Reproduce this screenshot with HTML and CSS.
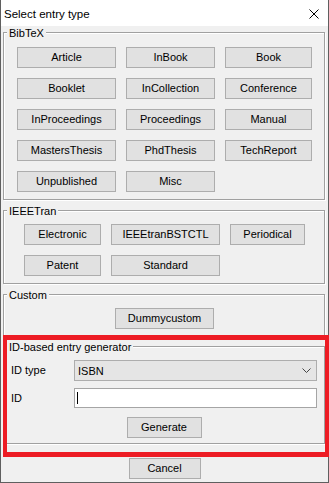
FILE: index.html
```html
<!DOCTYPE html>
<html>
<head>
<meta charset="utf-8">
<title>Select entry type</title>
<link rel="stylesheet" href="styles.css">
</head>
<body>
<div class="window">
  <div class="titlebar">
    <span class="title">Select entry type</span>
    <svg class="close" width="10" height="10" viewBox="0 0 10 10"><path d="M0.5 0.5 L9.5 9.5 M9.5 0.5 L0.5 9.5" stroke="#000" stroke-width="1" fill="none"/></svg>
  </div>
  <div class="body">
    <section class="group">
      <div class="group-title">BibTeX</div>
      <div class="btn-grid grid-bibtex">
        <button class="btn">Article</button>
        <button class="btn">InBook</button>
        <button class="btn">Book</button>
        <button class="btn">Booklet</button>
        <button class="btn">InCollection</button>
        <button class="btn">Conference</button>
        <button class="btn">InProceedings</button>
        <button class="btn">Proceedings</button>
        <button class="btn">Manual</button>
        <button class="btn">MastersThesis</button>
        <button class="btn">PhdThesis</button>
        <button class="btn">TechReport</button>
        <button class="btn">Unpublished</button>
        <button class="btn">Misc</button>
      </div>
    </section>
    <section class="group">
      <div class="group-title">IEEETran</div>
      <div class="btn-grid grid-ieee">
        <button class="btn">Electronic</button>
        <button class="btn">IEEEtranBSTCTL</button>
        <button class="btn">Periodical</button>
        <button class="btn">Patent</button>
        <button class="btn">Standard</button>
      </div>
    </section>
    <section class="group">
      <div class="group-title">Custom</div>
      <div class="custom-row">
        <button class="btn btn-custom">Dummycustom</button>
      </div>
    </section>
    <section class="group group-id">
      <div class="group-title">ID-based entry generator</div>
      <div class="id-form">
        <label class="field-label">ID type</label>
        <div class="combo">
          <span>ISBN</span>
          <svg class="chevron" width="9" height="5" viewBox="0 0 9 5"><polyline points="0.5,0.5 4.5,4.5 8.5,0.5" fill="none" stroke="#444" stroke-width="1"/></svg>
        </div>
        <label class="field-label">ID</label>
        <div class="textfield"><span class="caret"></span></div>
        <button class="btn btn-generate">Generate</button>
      </div>
    </section>
    <div class="footer">
      <button class="btn btn-cancel">Cancel</button>
    </div>
  </div>
  <div class="highlight"></div>
</div>
</body>
</html>
```

FILE: styles.css
```css
* { box-sizing: border-box; }

html, body {
  margin: 0;
  padding: 0;
  background: #f0f0f0;
}

body {
  font-family: "Liberation Sans", Arial, sans-serif;
  font-size: 11px;
  color: #000;
}

.window {
  position: relative;
  width: 329px;
  height: 483px;
  border: 1px solid #5f5f5f;
  border-top: none;
  background: #f0f0f0;
  display: flex;
  flex-direction: column;
}

.titlebar {
  height: 26px;
  background: #fff;
  display: flex;
  align-items: center;
  padding-left: 3px;
}

.title {
  font-size: 11.5px;
  line-height: 14px;
  margin-top: 1px;
}

.close {
  margin-left: auto;
  margin-right: 9px;
  align-self: flex-start;
  margin-top: 9px;
}

.body {
  padding: 6px 3px 0 2px;
}

.group {
  border: 1px solid #a0a0a0;
  box-shadow: 1px 1px 0 #fff, inset 1px 1px 0 #fff;
  margin-top: 10px;
}

.group:first-child {
  margin-top: 0;
}

.group-title {
  margin: -6px 0 0 3px;
  padding: 0 2px;
  width: fit-content;
  background: #f0f0f0;
  line-height: 13px;
  font-size: 11px;
}

.btn {
  font-family: "Liberation Sans", Arial, sans-serif;
  font-size: 11px;
  color: #000;
  background: #e1e1e1;
  border: 1px solid #adadad;
  border-radius: 0;
  margin: 0;
  padding: 0;
  height: 21px;
  line-height: 19px;
  text-align: center;
}

.btn-grid {
  display: grid;
  grid-auto-rows: 21px;
  gap: 10px;
}

.grid-bibtex {
  grid-template-columns: 99px 89px 87px;
  padding: 7px 0 7px 13px;
}

.grid-ieee {
  grid-template-columns: 77px 109px 75px;
  padding: 6px 0 7px 20px;
}

.custom-row {
  display: flex;
  justify-content: center;
  padding: 6px 0 6px 1px;
}

.btn-custom {
  width: 99px;
}

.group-id {
  margin-top: 10px;
}

.id-form {
  display: grid;
  grid-template-columns: 63px 243px;
  grid-template-rows: 21px 20px 21px;
  row-gap: 7px;
  padding: 6px 7px 7px 7px;
}

.field-label {
  align-self: center;
  line-height: 13px;
}

.combo {
  background: #e5e5e5;
  border: 1px solid #adadad;
  display: flex;
  align-items: center;
  justify-content: space-between;
  padding: 0 5px 0 3px;
}

.textfield {
  background: #fff;
  border: 1px solid #a5a5a5;
  display: flex;
  align-items: center;
  padding-left: 2px;
}

.caret {
  width: 1px;
  height: 12px;
  background: #000;
}

.btn-generate {
  grid-column: 1 / -1;
  justify-self: center;
  width: 75px;
  margin-top: 2px;
}

.footer {
  display: flex;
  justify-content: center;
  padding: 14px 0 0 1px;
}

.btn-cancel {
  width: 72px;
}

.highlight {
  position: absolute;
  left: 2px;
  top: 335px;
  width: 326px;
  height: 122px;
  border-style: solid;
  border-color: #ed1c24;
  border-width: 5px 4px 5px 4px;
  pointer-events: none;
}
```
